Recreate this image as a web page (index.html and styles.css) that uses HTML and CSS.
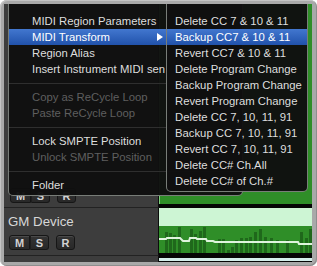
FILE: index.html
```html
<!DOCTYPE html>
<html lang="en">
<head>
    <meta charset="UTF-8">
    <title>MIDI Transform menu</title>
    <link rel="stylesheet" href="styles.css">
</head>
<body>
    <div class="frame">
        <div class="screen">
            <div class="tracks">
                <!-- upper track, mostly hidden by the menu -->
                <div class="track track-upper">
                    <div class="track-header">
                        <div class="track-buttons">
                            <div class="btn-group">
                                <span class="btn btn-m">M</span>
                                <span class="btn btn-s">S</span>
                            </div>
                            <span class="btn btn-r">R</span>
                        </div>
                    </div>
                    <div class="track-lane">
                        <div class="region region-plain"></div>
                    </div>
                </div>

                <!-- GM Device -->
                <div class="track track-gm">
                    <div class="track-header">
                        <div class="track-name">GM Device</div>
                        <div class="track-buttons">
                            <div class="btn-group">
                                <span class="btn btn-m">M</span>
                                <span class="btn btn-s">S</span>
                            </div>
                            <span class="btn btn-r">R</span>
                        </div>
                    </div>
                    <div class="track-lane">
                        <div class="region">
                            <div class="region-head"></div>
                            <div class="region-body">
                                <svg width="153" height="27" viewBox="0 0 153 27">
                                    <g fill="#1f681b">
                                        <rect x="6" y="6" width="3" height="21"/>
                                        <rect x="10" y="7" width="3" height="20"/>
                                        <rect x="14" y="9" width="3" height="18"/>
                                        <rect x="19" y="1" width="3" height="26"/>
                                        <rect x="31" y="3" width="3" height="24"/>
                                        <rect x="35" y="8" width="3" height="19"/>
                                        <rect x="40" y="5" width="3" height="22"/>
                                        <rect x="44" y="1" width="3" height="26"/>
                                        <rect x="59" y="13" width="3" height="14"/>
                                        <rect x="63" y="13" width="3" height="14"/>
                                        <rect x="68" y="24" width="3" height="3"/>
                                        <rect x="72" y="21" width="3" height="6"/>
                                        <rect x="76" y="14" width="3" height="13"/>
                                        <rect x="81" y="12" width="3" height="15"/>
                                        <rect x="86" y="12" width="3" height="15"/>
                                        <rect x="90" y="11" width="3" height="16"/>
                                        <rect x="95" y="6" width="3" height="21"/>
                                        <rect x="100" y="3" width="3" height="24"/>
                                        <rect x="105" y="11" width="3" height="16"/>
                                        <rect x="111" y="12" width="3" height="15"/>
                                        <rect x="117" y="14" width="3" height="13"/>
                                        <rect x="127" y="14" width="3" height="13"/>
                                        <rect x="141" y="6" width="3" height="21"/>
                                        <rect x="146" y="12" width="3" height="15"/>
                                        <rect x="150" y="3" width="3" height="24"/>
                                    </g>
                                    <polyline fill="none" stroke="#dff4dd" stroke-width="2"
                                        points="0,13 7,13 8,12 21,12 24,15 30,15 31,12 37,12 38,13 47,13 48,15 54,15 56,16 139,16 140,18 153,18"/>
                                </svg>
                            </div>
                        </div>
                    </div>
                </div>

                <!-- next track, just its top edge -->
                <div class="track track-next">
                    <div class="track-header"></div>
                    <div class="track-lane">
                        <div class="region-head region-head-next"></div>
                    </div>
                </div>
            </div>

            <!-- context menu -->
            <div class="menu menu-main">
                <div class="menu-item">MIDI Region Parameters</div>
                <div class="menu-item is-active">
                    <span class="menu-label">MIDI Transform</span>
                    <svg class="submenu-arrow" width="6" height="8" viewBox="0 0 6 8"><path d="M0 0 L6 4 L0 8 Z" fill="#fff"/></svg>
                </div>
                <div class="menu-item">Region Alias</div>
                <div class="menu-item">Insert Instrument MIDI sen</div>
                <div class="menu-sep"></div>
                <div class="menu-item is-disabled">Copy as ReCycle Loop</div>
                <div class="menu-item is-disabled">Paste ReCycle Loop</div>
                <div class="menu-sep"></div>
                <div class="menu-item">Lock SMPTE Position</div>
                <div class="menu-item is-disabled">Unlock SMPTE Position</div>
                <div class="menu-sep"></div>
                <div class="menu-item">Folder</div>
            </div>

            <div class="menu menu-sub">
                <div class="menu-item">Delete CC 7 &amp; 10 &amp; 11</div>
                <div class="menu-item is-active">Backup CC7 &amp; 10 &amp; 11</div>
                <div class="menu-item">Revert CC7 &amp; 10 &amp; 11</div>
                <div class="menu-item">Delete Program Change</div>
                <div class="menu-item">Backup Program Change</div>
                <div class="menu-item">Revert Program Change</div>
                <div class="menu-item">Delete CC 7, 10, 11, 91</div>
                <div class="menu-item">Backup CC 7, 10, 11, 91</div>
                <div class="menu-item">Revert CC 7, 10, 11, 91</div>
                <div class="menu-item">Delete CC# Ch.All</div>
                <div class="menu-item">Delete CC# of Ch.#</div>
            </div>
        </div>
    </div>
</body>
</html>
```

FILE: styles.css
```css
* {
    margin: 0;
    padding: 0;
    box-sizing: border-box;
}

html, body {
    width: 317px;
    height: 266px;
    background: #ffffff;
    font-family: 'Liberation Sans', Arial, sans-serif;
    overflow: hidden;
}

/* grey window frame round the screenshot */
.frame {
    width: 317px;
    height: 266px;
    padding: 4px 5px 4px 4px;
    background: #a9a9a9;
    border-radius: 7px;
    box-shadow: inset 1px 1px 0 #c4c4c4, inset -1px -1px 0 #8e8e8e;
}

.screen {
    position: relative;
    width: 308px;
    height: 258px;
    background: #3d3d3d;
    overflow: hidden;
    box-shadow: inset 0 -1px 0 #27347c;
}

/* tracks */
.tracks {
    display: flex;
    flex-direction: column;
}

.track {
    display: grid;
    grid-template-columns: 155px 153px;
}

.track-header {
    background: #3d3d3d;
    border-right: 1px solid #0c0c0c;
    border-bottom: 1px solid #222;
    display: flex;
    flex-direction: column;
    justify-content: flex-end;
    padding: 0 0 4px 5px;
}

.track-upper {
    height: 204px;
}

.track-gm {
    height: 48px;
}

.track-gm .track-header {
    justify-content: flex-start;
    padding: 6px 0 0 4px;
}

.track-next {
    height: 6px;
}

.track-next .track-header {
    border-bottom: none;
}

.track-name {
    font-size: 13.3px;
    line-height: 16px;
    color: #d7d7d7;
    margin-bottom: 5px;
}

.track-buttons {
    display: flex;
    gap: 7px;
    padding-left: 1px;
}

.btn-group {
    display: flex;
}

.btn {
    height: 15px;
    width: 19px;
    display: flex;
    align-items: center;
    justify-content: center;
    font-size: 11px;
    font-weight: bold;
    color: #d2d2d2;
    background: linear-gradient(#343434, #282828);
    border: 1px solid #161616;
    box-shadow: inset 0 1px 0 #4a4a4a;
    border-radius: 3px;
}

.btn-m {
    width: 21px;
    border-radius: 3px 0 0 3px;
}

.btn-s {
    border-left: 1px solid #1e1e1e;
    border-radius: 0 3px 3px 0;
}

/* regions */
.track-lane {
    background: #050505;
}

.region-plain {
    height: 200px;
    background: #2f8e28;
    box-shadow: inset 1px 0 0 #7ccf7a;
}

.region-head {
    height: 18px;
    background: #cdf5d4;
}

.region-body {
    height: 27px;
    background: #2f8e28;
}

.region-body svg {
    display: block;
}

.region-head-next {
    margin-top: 2px;
    height: 3px;
    background: #d3eeea;
}

/* menus */
.menu {
    position: absolute;
    top: -8px;
    background: rgba(16, 16, 16, 0.97);
    border: 1px solid rgba(190, 198, 190, 0.6);
    border-radius: 5px;
    padding: 16px 0 2px;
    font-size: 11.3px;
    color: #dedede;
}

.menu-main {
    left: 4px;
    width: 235px;
    z-index: 1;
}

.menu-sub {
    left: 162px;
    width: 142px;
    z-index: 2;
}

.menu-item {
    height: 16px;
    line-height: 16px;
    white-space: nowrap;
    overflow: hidden;
    display: flex;
    align-items: center;
}

.menu-main .menu-item {
    padding-left: 23px;
}

.menu-sub .menu-item {
    padding-left: 8px;
}

.menu-item.is-active {
    background: linear-gradient(#4277cf, #2152ab);
    color: #ffffff;
}

.menu-item.is-disabled {
    color: #5f5f5f;
}

.menu-label {
    flex: 0 0 125px;
}

.submenu-arrow {
    display: block;
}

.menu-sep {
    height: 12px;
    display: flex;
    align-items: center;
}

.menu-sep::after {
    content: "";
    display: block;
    width: 100%;
    height: 1px;
    background: #2f2f2f;
}
```
